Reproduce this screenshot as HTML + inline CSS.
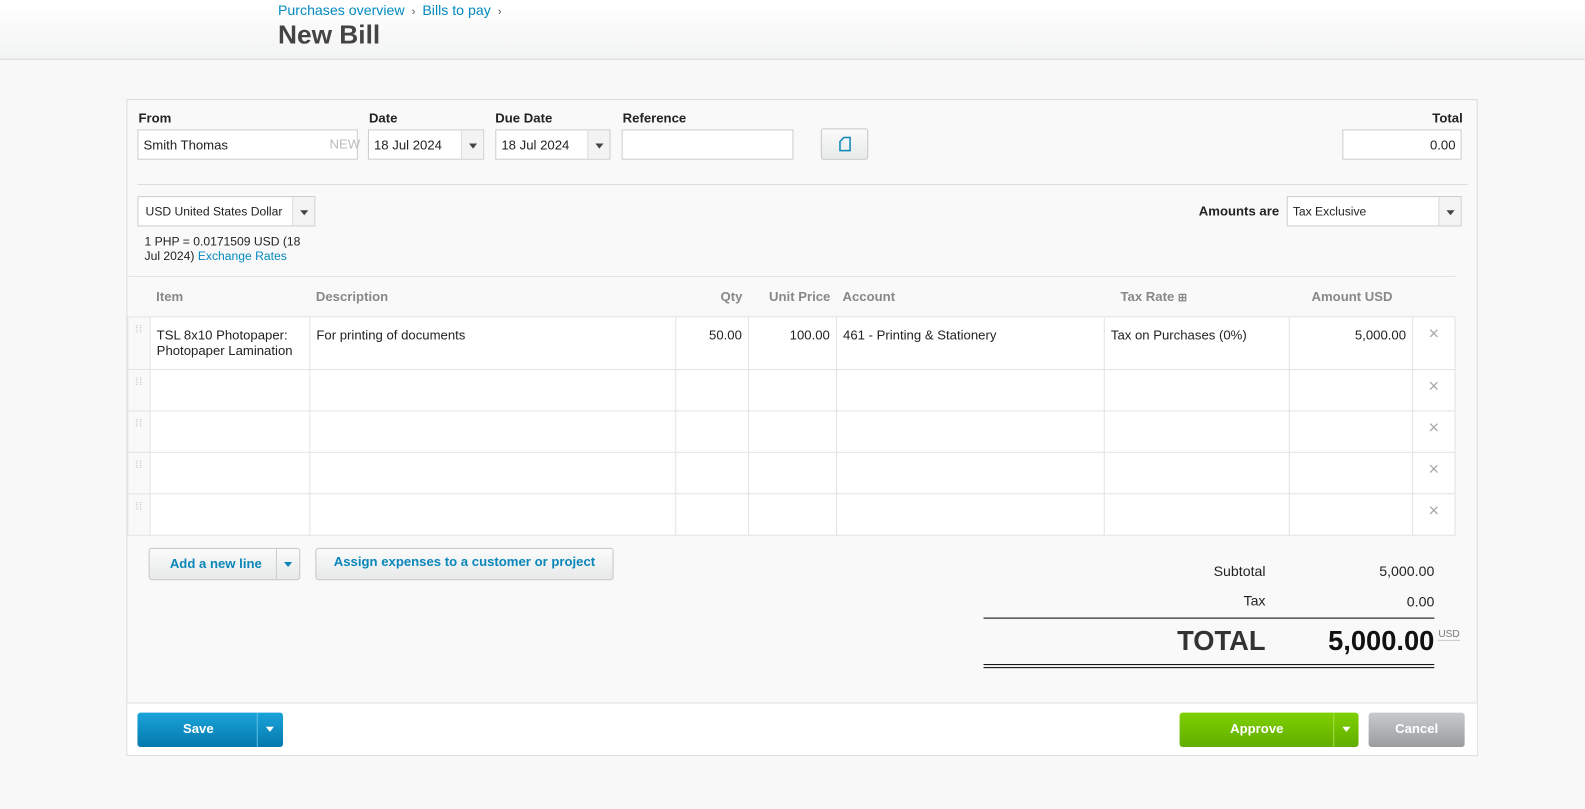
<!DOCTYPE html>
<html><head><meta charset="utf-8"><style>
*{box-sizing:border-box;margin:0;padding:0}
body{width:1585px;height:808px;background:#f8f8f8;font-family:"Liberation Sans",Arial,sans-serif;font-size:13px;color:#222;position:relative;overflow:hidden}
#w{position:absolute;left:0;top:0;width:1568px;height:800px;transform:scale(1.0108);transform-origin:0 0}
.a{position:absolute}
.hdr{left:0;top:0;width:1568px;height:59px;background:linear-gradient(#fff,#f3f4f5);border-bottom:1px solid #d6d6d6}
.link{color:#048abf}
.panel{left:125px;top:98px;width:1337px;height:650px;background:#f9f9f9;border:1px solid #dcdcdc}
.lbl{font-weight:bold;font-size:13px;color:#222}
.inp{background:#fff;border:1px solid #ccc;height:30px;font-size:13px;padding:7px 5px;white-space:nowrap}
.dd{position:absolute;right:0;top:0;bottom:0;width:22px;border-left:1px solid #ddd;background:#f3f3f3}
.dd:after{content:"";position:absolute;left:7px;top:13px;border-left:4px solid transparent;border-right:4px solid transparent;border-top:5px solid #444}
table{border-collapse:collapse;position:absolute;left:126px;top:273px;width:1313px;table-layout:fixed}
td,th{border:1px solid #e3e3e3;vertical-align:top;font-size:13px}
th{height:40px;font-weight:bold;color:#888;text-align:left;padding:0 6px;vertical-align:middle;background:#f9f9f9;border-left:none;border-right:none}
td{background:#fff;height:41px;padding:10px 6px}
td.h{background:#f9f9f9;color:#bbb;padding:10px 0 0 7px;font-size:10px;letter-spacing:1px;line-height:5px}
td.x{color:#aaa;font-size:18px;text-align:center;padding:6px 0;background:#fff}
.r{text-align:right}
.btn{border:1px solid #c6c6c6;border-radius:3px;background:linear-gradient(#fbfbfb,#e7e9ea);color:#0a86b9;font-weight:bold;font-size:13px;text-align:center}
</style></head><body><div id="w">
<div class="a hdr"></div>
<div class="a link" style="left:275px;top:2px;font-size:14px">Purchases overview <span style="color:#555;font-size:11px">&nbsp;›&nbsp;</span> Bills to pay <span style="color:#555;font-size:11px">&nbsp;›</span></div>
<div class="a" style="left:275px;top:19px;font-size:26px;font-weight:bold;color:#444">New Bill</div>
<div class="a panel"></div>

<div class="a lbl" style="left:137px;top:109px">From</div>
<div class="a inp" style="left:136px;top:128px;width:218px">Smith Thomas<span style="position:absolute;left:189px;top:6px;color:#bbb">NEW</span></div>
<div class="a lbl" style="left:365px;top:109px">Date</div>
<div class="a inp" style="left:364px;top:128px;width:115px">18 Jul 2024<div class="dd"></div></div>
<div class="a lbl" style="left:490px;top:109px">Due Date</div>
<div class="a inp" style="left:490px;top:128px;width:114px">18 Jul 2024<div class="dd"></div></div>
<div class="a lbl" style="left:616px;top:109px">Reference</div>
<div class="a inp" style="left:615px;top:128px;width:170px"></div>
<div class="a btn" style="left:812px;top:127px;width:47px;height:31px"><svg width="12" height="15" viewBox="0 0 12 15" style="margin-top:7px"><path d="M1 5 L5 1 H11 V14 H1 Z" fill="none" stroke="#0a86b9" stroke-width="1.5"/></svg></div>
<div class="a lbl" style="left:1417px;top:109px">Total</div>
<div class="a inp r" style="left:1328px;top:128px;width:118px">0.00</div>
<div class="a" style="left:136px;top:182px;width:1316px;border-top:1px solid #ddd"></div>

<div class="a inp" style="left:136px;top:194px;width:176px;font-size:12px;padding-left:7px">USD United States Dollar<div class="dd"></div></div>
<div class="a" style="left:143px;top:232px;font-size:12px;line-height:14px;width:170px">1 PHP = 0.0171509 USD (18 Jul 2024) <span class="link">Exchange Rates</span></div>
<div class="a lbl" style="left:1186px;top:201px">Amounts are</div>
<div class="a inp" style="left:1273px;top:194px;width:173px;font-size:12px">Tax Exclusive<div class="dd"></div></div>

<table>
<colgroup><col style="width:22px"><col style="width:158px"><col style="width:362px"><col style="width:72px"><col style="width:87px"><col style="width:265px"><col style="width:183px"><col style="width:122px"><col style="width:42px"></colgroup>
<tr><th></th><th style="padding-left:6px">Item</th><th>Description</th><th class="r">Qty</th><th class="r">Unit Price</th><th>Account</th><th style="padding-left:16px">Tax Rate <span style="font-size:11px">⊞</span></th><th style="padding-left:22px">Amount USD</th><th></th></tr>
<tr><td class="h" style="height:52px">⁞⁞</td><td style="line-height:15px;padding-top:10px">TSL 8x10 Photopaper: Photopaper Lamination</td><td>For printing of documents</td><td class="r">50.00</td><td class="r">100.00</td><td>461 - Printing &amp; Stationery</td><td>Tax on Purchases (0%)</td><td class="r">5,000.00</td><td class="x">×</td></tr>
<tr><td class="h">⁞⁞</td><td></td><td></td><td></td><td></td><td></td><td></td><td></td><td class="x">×</td></tr>
<tr><td class="h">⁞⁞</td><td></td><td></td><td></td><td></td><td></td><td></td><td></td><td class="x">×</td></tr>
<tr><td class="h">⁞⁞</td><td></td><td></td><td></td><td></td><td></td><td></td><td></td><td class="x">×</td></tr>
<tr><td class="h">⁞⁞</td><td></td><td></td><td></td><td></td><td></td><td></td><td></td><td class="x">×</td></tr>
</table>

<div class="a btn" style="left:147px;top:542px;width:150px;height:32px;line-height:30px;text-align:left;padding-left:20px">Add a new line<div style="position:absolute;left:125px;top:0;bottom:0;border-left:1px solid #ccc;width:24px"><span style="position:absolute;left:7px;top:13px;border-left:4px solid transparent;border-right:4px solid transparent;border-top:5px solid #0a86b9"></span></div></div>
<div class="a btn" style="left:312px;top:542px;width:295px;height:32px;line-height:26px">Assign expenses to a customer or project</div>

<div class="a r" style="left:1150px;top:557px;width:102px;font-size:14px">Subtotal</div>
<div class="a r" style="left:1300px;top:557px;width:119px;font-size:14px">5,000.00</div>
<div class="a r" style="left:1150px;top:586px;width:102px;font-size:14px">Tax</div>
<div class="a r" style="left:1300px;top:587px;width:119px;font-size:14px">0.00</div>
<div class="a" style="left:973px;top:611px;width:446px;border-top:1px solid #000"></div>
<div class="a r" style="left:1100px;top:619px;width:152px;font-size:27px;font-weight:bold;color:#333">TOTAL</div>
<div class="a r" style="left:1250px;top:619px;width:169px;font-size:27px;font-weight:bold;color:#111">5,000.00</div>
<div class="a" style="left:1423px;top:622px;font-size:10px;color:#777;border-bottom:1px dotted #999">USD</div>
<div class="a" style="left:973px;top:657px;width:446px;height:4px;border-top:1px solid #000;border-bottom:1px solid #000"></div>

<div class="a" style="left:126px;top:695px;width:1335px;height:52px;background:#fff;border-top:1px solid #ddd"></div>
<div class="a" style="left:136px;top:705px;width:144px;height:34px;border-radius:3px;background:linear-gradient(#1aa4da,#0479ad);color:#fff;font-weight:bold;font-size:13px;line-height:32px;padding-left:45px">Save<div style="position:absolute;left:118px;top:0;bottom:0;border-left:1px solid #5cc0e6"><span style="position:absolute;left:8px;top:14px;border-left:4px solid transparent;border-right:4px solid transparent;border-top:5px solid #fff"></span></div></div>
<div class="a" style="left:1167px;top:705px;width:177px;height:34px;border-radius:3px;background:linear-gradient(#7fd000,#62ad00);color:#fff;font-weight:bold;font-size:13px;line-height:32px;padding-left:50px">Approve<div style="position:absolute;left:152px;top:0;bottom:0;border-left:1px solid #a4df4a"><span style="position:absolute;left:8px;top:14px;border-left:4px solid transparent;border-right:4px solid transparent;border-top:5px solid #fff"></span></div></div>
<div class="a" style="left:1354px;top:705px;width:95px;height:34px;border-radius:3px;background:linear-gradient(#c8cacc,#9a9c9e);color:#fff;font-weight:bold;font-size:13px;line-height:32px;text-align:center">Cancel</div>
</div></body></html>
